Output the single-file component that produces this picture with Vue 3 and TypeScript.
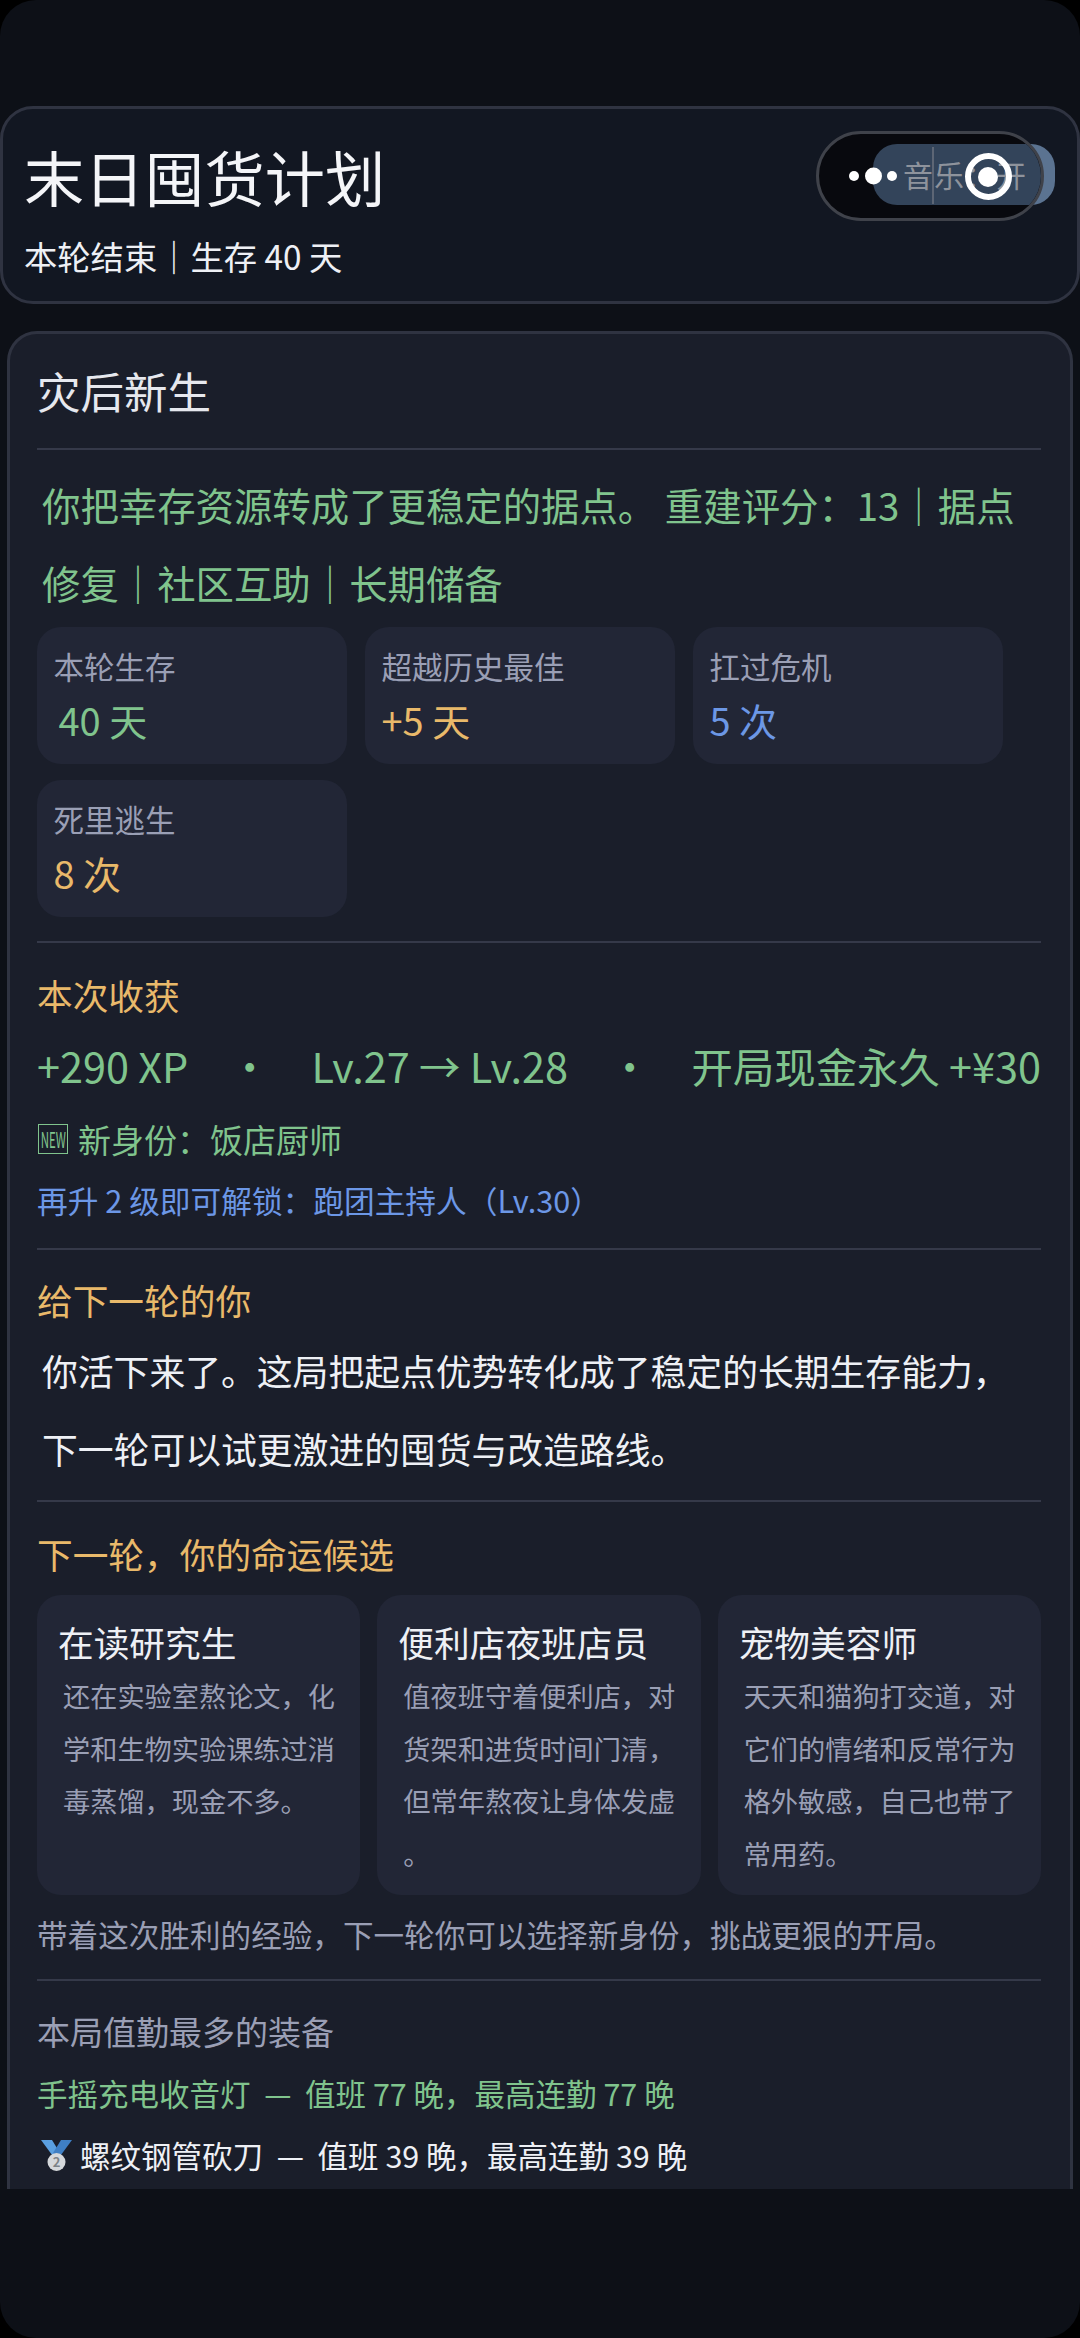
<script setup lang="ts">
interface Stat { label: string; value: string; tone: string; indent?: boolean }
interface Fate { name: string; desc: string }

const stats: Stat[] = [
  { label: '本轮生存', value: '40 天', tone: 'green', indent: true },
  { label: '超越历史最佳', value: '+5 天', tone: 'orange' },
  { label: '扛过危机', value: '5 次', tone: 'blue' },
  { label: '死里逃生', value: '8 次', tone: 'orange' },
]
const gains: string[] = ['+290 XP', '·', 'Lv.27 → Lv.28', '·', '开局现金永久 +¥30']
const fates: Fate[] = [
  { name: '在读研究生', desc: '还在实验室熬论文，化学和生物实验课练过消毒蒸馏，现金不多。' },
  { name: '便利店夜班店员', desc: '值夜班守着便利店，对货架和进货时间门清，但常年熬夜让身体发虚。' },
  { name: '宠物美容师', desc: '天天和猫狗打交道，对它们的情绪和反常行为格外敏感，自己也带了常用药。' },
]
</script>

<template>
  <div class="page">
    <div class="scroll">
      <header class="hero">
        <div>
          <h1 class="hero-title">末日囤货计划</h1>
          <p class="hero-sub">本轮结束｜生存 40 天</p>
        </div>
      </header>
      <main class="card">
        <h2 class="card-title">灾后新生</h2>
        <section class="intro rule">
          <p class="intro-text">你把幸存资源转成了更稳定的据点。&nbsp;重建评分：13｜据点修复｜社区互助｜长期储备</p>
          <div class="stats">
            <div v-for="s in stats" :key="s.label" class="stat">
              <div class="stat-label">{{ s.label }}</div>
              <div class="stat-value" :class="[s.tone, { indent: s.indent }]">{{ s.value }}</div>
            </div>
          </div>
        </section>
        <section class="gain rule">
          <h3 class="sec-title">本次收获</h3>
          <div class="gain-row"><span v-for="(g, i) in gains" :key="i">{{ g }}</span></div>
          <div class="new-row">
            <span class="new-box"><span class="new-word">NEW</span></span>
            <span>新身份：饭店厨师</span>
          </div>
          <div class="unlock">再升 2 级即可解锁：跑团主持人（Lv.30）</div>
        </section>
        <section class="letter rule">
          <h3 class="sec-title">给下一轮的你</h3>
          <p class="letter-text">你活下来了。这局把起点优势转化成了稳定的长期生存能力，下一轮可以试更激进的囤货与改造路线。</p>
        </section>
        <section class="fate rule">
          <h3 class="sec-title">下一轮，你的命运候选</h3>
          <div class="fates">
            <div v-for="f in fates" :key="f.name" class="fate-card">
              <div class="fate-name">{{ f.name }}</div>
              <div class="fate-desc">{{ f.desc }}</div>
            </div>
          </div>
          <p class="fate-note">带着这次胜利的经验，下一轮你可以选择新身份，挑战更狠的开局。</p>
        </section>
        <section class="gear rule">
          <h3 class="gear-title">本局值勤最多的装备</h3>
          <div class="gear-one">手摇充电收音灯 &nbsp;—&nbsp; 值班 77 晚，最高连勤 77 晚</div>
          <div class="gear-two">
            <svg class="medal" viewBox="0 0 31 31" aria-hidden="true">
              <path d="M0 0h11l8 13-5 6z" fill="#5a9fe0" />
              <path d="M31 0H20l-8 13 5 6z" fill="#3f7fc4" />
              <circle cx="15.5" cy="22" r="9" fill="#d5d8db" />
              <text x="15.5" y="26.5" text-anchor="middle" font-size="13" font-weight="700" fill="#7d8388">2</text>
            </svg>
            <span>螺纹钢管砍刀 &nbsp;—&nbsp; 值班 39 晚，最高连勤 39 晚</span>
          </div>
        </section>
      </main>
    </div>
    <div class="music-tail"></div>
    <div class="capsule">
      <div class="music"><span>音乐：开</span></div>
      <div class="cap-line"></div>
      <span class="dot small d1"></span>
      <span class="dot big"></span>
      <span class="dot small d3"></span>
      <span class="ring"><span class="ring-core"></span></span>
    </div>
  </div>
</template>

<style>
html, body { margin: 0; background: #000; }
</style>

<style scoped>
* { box-sizing: border-box; }
h1, h2, h3, p { margin: 0; font-weight: 400; }
.page {
  position: relative;
  width: 1080px;
  height: 2338px;
  overflow: hidden;
  padding-top: 106px;
  border-radius: 36px;
  background: #0d1017;
  color: #eef0f5;
  font-family: "Noto Sans CJK SC", "Noto Sans", sans-serif;
}
.scroll { height: 2083px; overflow: hidden; }
.hero {
  height: 198px;
  padding: 25px 24px 0;
  border: 3px solid #2f3341;
  border-radius: 33px;
  background: #121722;
}
.hero-title { margin-left: -3px; font-size: 60.2px; line-height: 84px; color: #f4f5f8; }
.hero-sub { margin: 11px 0 0 -3px; font-size: 33.3px; line-height: 54px; color: #eef0f5; }
.card {
  width: 1066px;
  margin: 27px 0 0 7px;
  padding: 24px 29px 40px 27px;
  border: 3px solid #2f3341;
  border-bottom: 0;
  border-radius: 30px 30px 0 0;
  background: #1a1e2a;
}
.card-title { font-size: 43.5px; line-height: 66px; margin-bottom: 24px; color: #e6e8ee; }
.rule { border-top: 2px solid #353949; }
.intro { padding: 14.5px 0 24px; }
.intro-text { padding-left: 5px; font-size: 38.4px; line-height: 78px; color: #80c48d; }
.stats { display: flex; flex-wrap: wrap; gap: 16px 18px; margin-top: 6.5px; }
.stat {
  width: 310px;
  height: 137px;
  padding: 16px 16.5px 0;
  border-radius: 24px;
  background: #222636;
}
.stat-label { font-size: 30.5px; line-height: 46px; color: #9a9fb5; }
.stat-value { margin-top: 4px; font-size: 38px; line-height: 54px; }
.stat-value.indent { padding-left: 5px; }
.green { color: #80c48d; }
.orange { color: #e9b96a; }
.blue { color: #6c97e6; }
.sec-title { font-size: 35.7px; line-height: 54px; color: #e9b96a; }
.gain { padding: 25px 0 21px; }
.gain-row {
  display: flex;
  justify-content: space-between;
  margin-top: 13px;
  font-size: 41.4px;
  line-height: 60px;
  color: #80c48d;
}
.new-row {
  display: flex;
  align-items: center;
  gap: 10px;
  margin-top: 17px;
  font-size: 33px;
  line-height: 54px;
  color: #80c48d;
}
.new-box {
  display: flex;
  align-items: center;
  justify-content: center;
  width: 30px;
  height: 30px;
  margin-left: 1px;
  border: 1px solid #80c48d;
  overflow: hidden;
}
.new-word {
  display: block;
  font-size: 14px;
  line-height: 26px;
  transform: scale(0.82, 1.55);
}
.unlock { margin-top: 7px; font-size: 30.7px; line-height: 54px; color: #6c97e6; }
.letter { padding: 23px 0 13px; }
.letter-text { margin-top: 4px; padding-left: 5px; font-size: 35.8px; line-height: 78px; color: #eef0f5; }
.fate { padding: 25px 0 18px; }
.fates { display: grid; grid-template-columns: repeat(3, 1fr); gap: 17px; margin-top: 14px; height: 300px; }
.fate-card { padding: 20px 21px 0; border-radius: 24px; background: #222636; }
.fate-name { font-size: 35.7px; line-height: 54px; color: #eef0f5; }
.fate-desc {
  margin-left: 5px;
  font-size: 27.2px;
  line-height: 52.65px;
  color: #9a9fb5;
  line-break: anywhere;
}
.fate-note { margin-top: 12px; font-size: 30.6px; line-height: 54px; color: #9a9fb5; }
.gear { padding: 23px 0 0; }
.gear-title { font-size: 33px; line-height: 54px; color: #9a9fb5; }
.gear-one { margin-top: 10px; font-size: 30.5px; line-height: 50px; color: #80c48d; }
.gear-two {
  display: flex;
  align-items: center;
  gap: 8px;
  margin-top: 12px;
  padding-left: 4px;
  font-size: 30.5px;
  line-height: 50px;
  color: #eef0f5;
}
.medal { width: 31px; height: 31px; flex: none; }
.music-tail {
  position: absolute;
  left: 873px;
  top: 144px;
  width: 182px;
  height: 61px;
  border-radius: 24px;
  background: #5b7391;
}
.capsule {
  position: absolute;
  left: 816px;
  top: 131px;
  width: 228px;
  height: 90px;
  overflow: hidden;
  border: 3px solid #3f424a;
  border-radius: 45px;
  background: #08090e;
}
.music {
  position: absolute;
  left: 54px;
  top: 10px;
  width: 200px;
  height: 61px;
  padding-left: 30px;
  border-radius: 24px 0 0 24px;
  background: #33445a;
  font-size: 30px;
  letter-spacing: 1px;
  line-height: 61px;
  color: #8e939c;
  white-space: nowrap;
}
.cap-line {
  position: absolute;
  left: 113px;
  top: 13px;
  width: 2px;
  height: 57px;
  background: #5d6675;
}
.dot { position: absolute; top: 42px; border-radius: 50%; background: #fff; transform: translateY(-50%); }
.dot.small { width: 10px; height: 10px; }
.d1 { left: 30px; }
.dot.big { left: 45.5px; width: 17px; height: 17px; }
.d3 { left: 68px; }
.ring {
  position: absolute;
  left: 145.5px;
  top: 19px;
  display: flex;
  align-items: center;
  justify-content: center;
  width: 47px;
  height: 47px;
  border: 6px solid #fff;
  border-radius: 50%;
}
.ring-core { width: 20px; height: 20px; border-radius: 50%; background: #fff; }
</style>
